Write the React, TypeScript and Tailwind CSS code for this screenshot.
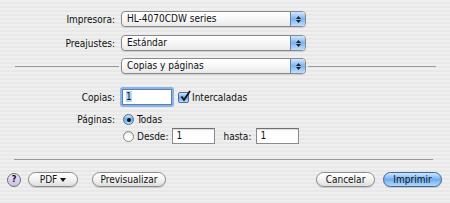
import React from 'react';

const font = {
  fontFamily: '"DejaVu Sans Condensed", "Liberation Sans", Arial, sans-serif',
};

function PopUp({ label }: { label: string }) {
  return (
    <div className="flex h-[16px] w-[185px] overflow-hidden rounded-[4px] border border-[#8a8a8a] bg-gradient-to-b from-white via-[#f7f7f7] to-[#e9e9e9] shadow-[0_1px_1px_rgba(0,0,0,0.12)]">
      <div className="flex-1 truncate pl-[5px] text-[10px] leading-[14px] text-[#111]">{label}</div>
      <div className="flex w-[15px] flex-col items-center justify-center gap-[1px] border-l border-[#5b82b5] bg-gradient-to-b from-[#d6e8fc] via-[#7cb1ea] to-[#c4e0fd]">
        <svg width="5" height="3" viewBox="0 0 5 3">
          <path d="M2.5 0 L5 3 L0 3 Z" fill="#1d2430" />
        </svg>
        <svg width="5" height="3" viewBox="0 0 5 3">
          <path d="M0 0 L5 0 L2.5 3 Z" fill="#1d2430" />
        </svg>
      </div>
    </div>
  );
}

function Field({ value, w }: { value: string; w: string }) {
  return (
    <div
      className={`h-[16px] ${w} border border-[#8b8b8b] border-t-[#6f6f6f] bg-white pl-[3px] text-[10px] leading-[14px] text-[#111] shadow-[inset_0_1px_1px_rgba(0,0,0,0.15)]`}
    >
      {value}
    </div>
  );
}

function Radio({ on }: { on: boolean }) {
  return on ? (
    <div className="flex h-[11px] w-[11px] items-center justify-center rounded-full border border-[#4d6f9a] bg-gradient-to-b from-[#cfe5fd] via-[#6ea9e8] to-[#b9dbfd]">
      <div className="h-[4px] w-[4px] rounded-full bg-[#111]" />
    </div>
  ) : (
    <div className="h-[11px] w-[11px] rounded-full border border-[#8a8a8a] bg-gradient-to-b from-[#f4f4f4] to-white shadow-[inset_0_1px_1px_rgba(0,0,0,0.12)]" />
  );
}

function Button({ children, w, primary }: { children: React.ReactNode; w: string; primary?: boolean }) {
  return (
    <div
      className={`flex h-[15px] ${w} items-center justify-center rounded-full border text-[10px] leading-none text-[#111] ${
        primary
          ? 'border-[#3f6594] bg-gradient-to-b from-[#cfe6ff] via-[#6eaeee] to-[#b3dafe]'
          : 'border-[#8c8c8c] bg-gradient-to-b from-white via-[#f3f3f3] to-[#dedede]'
      } shadow-[0_1px_1px_rgba(0,0,0,0.15)]`}
    >
      {children}
    </div>
  );
}

export default function App() {
  return (
    <div
      style={font}
      className="relative h-[203px] w-[450px] overflow-hidden bg-[repeating-linear-gradient(180deg,#efefef_0px,#efefef_2px,#e8e8e8_2px,#e8e8e8_4px)] text-[10px] text-[#111]"
    >
      <div className="flex flex-col pt-[11px]">
        <div className="flex items-center">
          <div className="w-[116px] pr-[1px] text-right">Impresora:</div>
          <div className="ml-[5px]">
            <PopUp label="HL-4070CDW series" />
          </div>
        </div>
        <div className="mt-[8px] flex items-center">
          <div className="w-[116px] pr-[1px] text-right">Preajustes:</div>
          <div className="ml-[5px]">
            <PopUp label="Estándar" />
          </div>
        </div>
        <div className="mt-[7px] flex items-center">
          <div className="ml-[15px] h-px w-[104px] bg-[#9a9a9a]" />
          <div className="ml-[2px]">
            <PopUp label="Copias y páginas" />
          </div>
          <div className="ml-[2px] h-px w-[128px] bg-[#9a9a9a]" />
        </div>

        <div className="mt-[15px] flex items-center">
          <div className="w-[116px] pr-[1px] text-right">Copias:</div>
          <div className="ml-[6px] rounded-[1px] shadow-[0_0_0_2px_#86b5eb]">
            <div className="h-[16px] w-[50px] border border-[#5f7fa8] bg-white pl-[3px] text-[10px] leading-[14px]">
              <span className="bg-[#b6d6fd]">1</span>
            </div>
          </div>
          <div className="ml-[6px] flex items-center">
            <div className="relative h-[11px] w-[11px] rounded-[2px] border border-[#4d6f9a] bg-gradient-to-b from-[#cfe5fd] via-[#6ea9e8] to-[#b9dbfd]">
              <svg className="absolute left-[1px] top-[-3px]" width="11" height="12" viewBox="0 0 11 12">
                <path d="M1.5 6.5 L4 10 L10 1" stroke="#111" strokeWidth="1.8" fill="none" />
              </svg>
            </div>
            <span className="ml-[3px]">Intercaladas</span>
          </div>
        </div>

        <div className="mt-[7px] flex items-center">
          <div className="w-[116px] pr-[1px] text-right">Páginas:</div>
          <div className="ml-[7px]">
            <Radio on />
          </div>
          <span className="ml-[3px]">Todas</span>
        </div>
        <div className="mt-[1px] flex items-center">
          <div className="ml-[123px]">
            <Radio on={false} />
          </div>
          <span className="ml-[3px]">Desde:</span>
          <div className="ml-[4px]">
            <Field value="1" w="w-[43px]" />
          </div>
          <span className="ml-[8px]">hasta:</span>
          <div className="ml-[5px]">
            <Field value="1" w="w-[43px]" />
          </div>
        </div>

        <div className="ml-[14px] mt-[15px] h-px w-[419px] bg-[#9a9a9a]" />

        <div className="mt-[12px] flex items-center">
          <div className="ml-[7px] flex h-[14px] w-[14px] items-center justify-center rounded-full border border-[#6f6f6f] bg-gradient-to-b from-[#ede5fa] to-[#cdbcec] text-[9px] font-bold leading-none">
            ?
          </div>
          <div className="ml-[7px]">
            <Button w="w-[50px]">
              <span>PDF</span>
              <svg className="ml-[3px]" width="6" height="4" viewBox="0 0 6 4">
                <path d="M0 0 L6 0 L3 4 Z" fill="#111" />
              </svg>
            </Button>
          </div>
          <div className="ml-[14px]">
            <Button w="w-[74px]">Previsualizar</Button>
          </div>
          <div className="ml-[150px]">
            <Button w="w-[59px]">Cancelar</Button>
          </div>
          <div className="ml-[8px]">
            <Button w="w-[59px]" primary>
              Imprimir
            </Button>
          </div>
        </div>
      </div>
    </div>
  );
}
